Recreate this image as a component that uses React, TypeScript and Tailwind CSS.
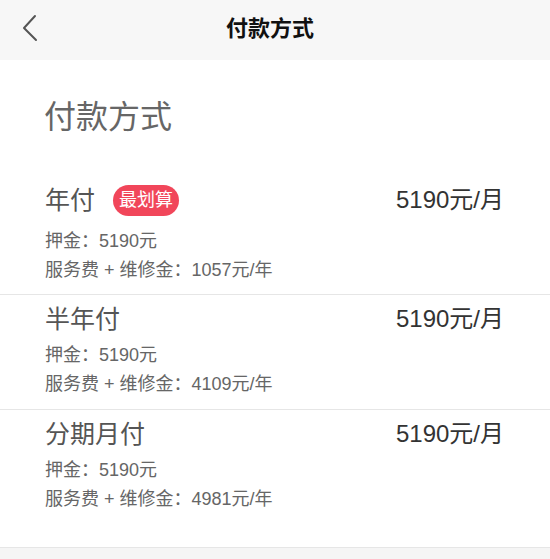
interface Plan {
    name: string;
    deposit: string;
    fee: string;
    price: string;
    best?: boolean;
}

const plans: Plan[] = [
    { name: '年付', deposit: '5190元', fee: '1057元/年', price: '5190元/月', best: true },
    { name: '半年付', deposit: '5190元', fee: '4109元/年', price: '5190元/月' },
    { name: '分期月付', deposit: '5190元', fee: '4981元/年', price: '5190元/月' },
];

export default function App() {
    return (
        <div
            className="w-[550px] h-[559px] bg-[#f5f5f5] flex flex-col overflow-hidden"
            style={{ fontFamily: '"Liberation Sans", "Noto Sans CJK SC", sans-serif' }}
        >
            {/* Header */}
            <div className="relative h-[60px] bg-[#f7f7f7] flex items-center justify-center shrink-0">
                <button className="absolute left-[16px] top-[10px] text-[#555]">
                    <svg width="28" height="36" viewBox="0 0 28 36" fill="none" stroke="currentColor" strokeWidth="2" strokeLinecap="round" strokeLinejoin="round">
                        <polyline points="19,6 8,18 20,30" />
                    </svg>
                </button>
                <h1 className="text-[22px] font-bold text-[#111] leading-none -mt-[2px] mr-[10px]">付款方式</h1>
            </div>

            <div className="bg-white flex flex-col">
                {/* Page title */}
                <div className="pl-[44px] pt-[35px] pb-[34px] text-[32px] leading-[44px] text-[#666]">付款方式</div>

                {plans.map((plan, i) => (
                    <div
                        key={plan.name}
                        className={`flex flex-col pl-[45px] pr-[46px] pt-[10px] ${i === 0 ? 'pb-[9px]' : 'border-t border-[#e6e6e6]'} ${i === 1 ? 'pb-[10px]' : ''} ${i === 2 ? 'pb-[33px]' : ''}`}
                    >
                        <div className={`flex items-center justify-between ${plan.best ? 'h-[34px]' : 'h-[28px]'}`}>
                            <div className="flex items-center gap-[18px]">
                                <span className="text-[25px] text-[#555] leading-none">{plan.name}</span>
                                {plan.best && (
                                    <span className="h-[31px] px-[6px] rounded-full bg-[#f1465a] text-white text-[18px] leading-none flex items-center">
                                        最划算
                                    </span>
                                )}
                            </div>
                            <span className="text-[24px] leading-none text-[#333]">{plan.price}</span>
                        </div>
                        <div className={`${plan.best ? 'mt-[10px]' : 'mt-[8px]'} text-[18px] leading-[29px] text-[#666]`}>
                            押金：{plan.deposit}
                        </div>
                        <div className="text-[18px] leading-[29px] text-[#666]">服务费 + 维修金：{plan.fee}</div>
                    </div>
                ))}
            </div>
            <div className="border-t border-[#e6e6e6] flex-1" />
        </div>
    );
}
